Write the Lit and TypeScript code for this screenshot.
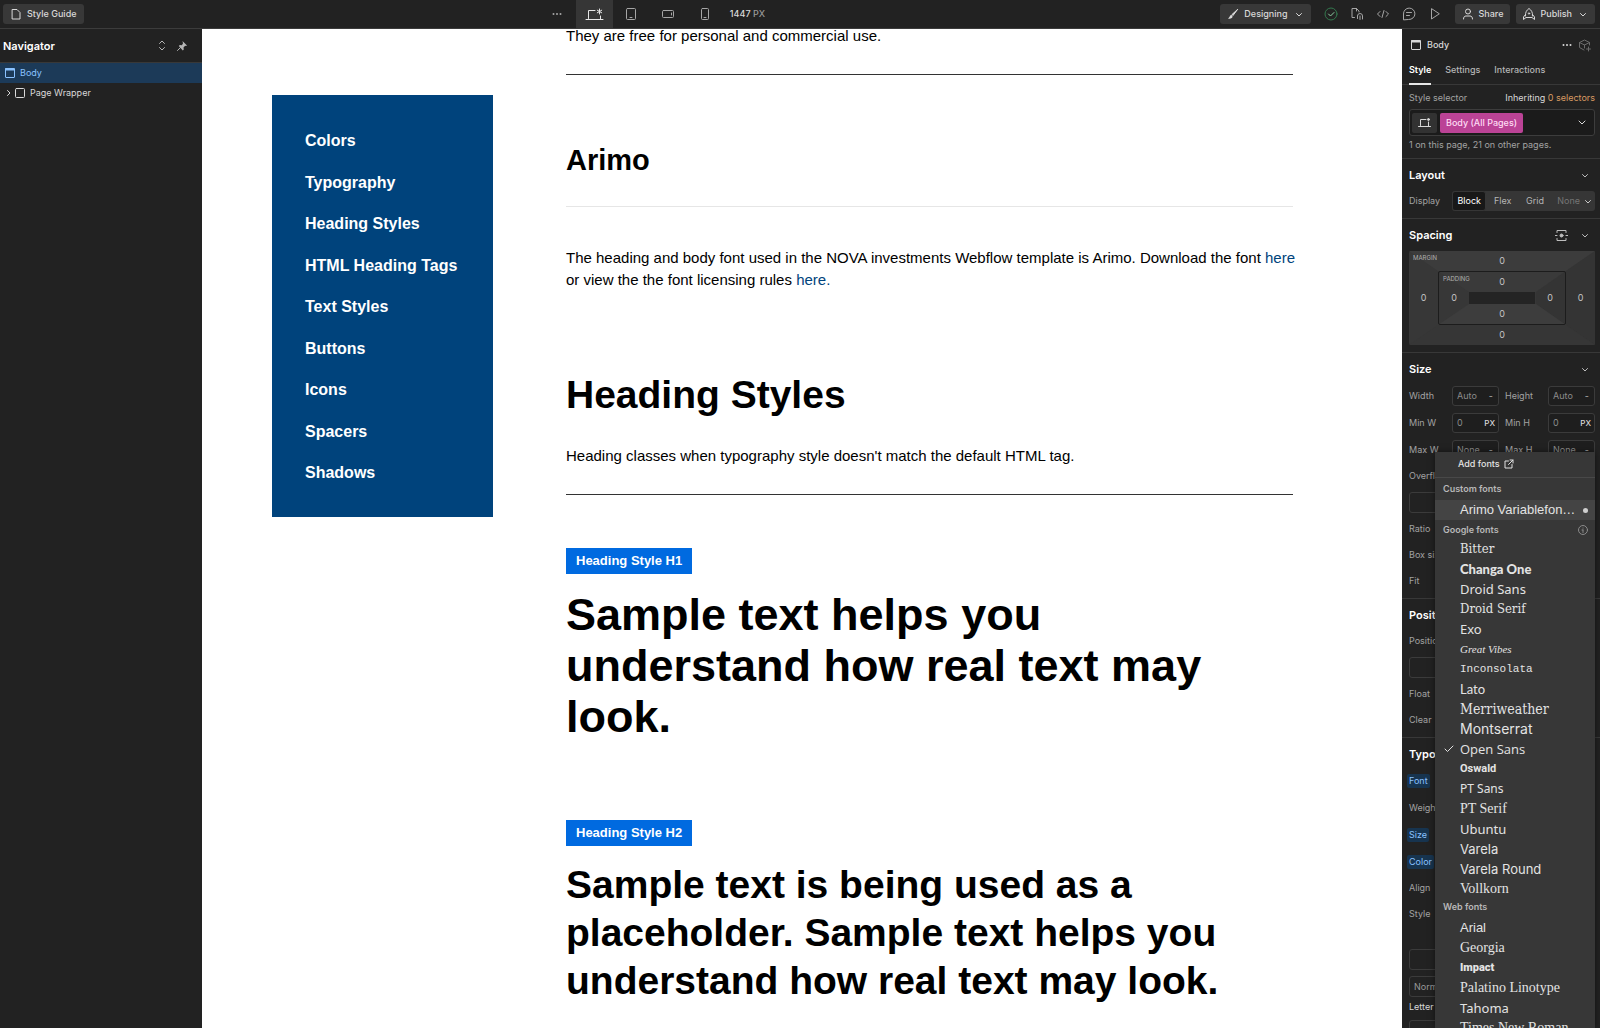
import { LitElement, html, css, svg, nothing } from "lit";
import { customElement } from "lit/decorators.js";
import { classMap } from "lit/directives/class-map.js";

const base = css`
  * {
    box-sizing: border-box;
  }
  :host {
    --ui: Inter, "Liberation Sans", sans-serif;
    --bg: #222222;
    --line: #383838;
    --text: #d9d9d9;
    --dim: #a3a3a3;
    display: block;
    min-width: 0;
    min-height: 0;
    color: var(--text);
    font: 400 9px/14px var(--ui);
  }
  button,
  input {
    margin: 0;
    padding: 0;
    border: 0;
    background: none;
    color: inherit;
    font: inherit;
  }
  h2,
  h3,
  p,
  ul {
    margin: 0;
    padding: 0;
  }
  ul {
    list-style: none;
  }
  svg {
    display: block;
    flex: none;
    fill: none;
    stroke: currentColor;
    stroke-linecap: round;
    stroke-linejoin: round;
  }
`;

const icon = (body: unknown, w = 14, h = 14) =>
  html`<svg width=${w} height=${h} viewBox="0 0 ${w} ${h}" aria-hidden="true">${body}</svg>`;

const chevron = () => icon(svg`<path d="M2.500 3.500L5 6l2.500-2.500"/>`, 10, 9);
const dots = () =>
  icon(svg`<g fill="currentColor" stroke="none"><circle cx="2.500" cy="7" r="1"/><circle cx="6" cy="7" r="1"/><circle cx="9.500" cy="7" r="1"/></g>`, 12, 14);
const desktop = () =>
  icon(svg`<path d="M3.500 11.500V3.500H10M1 12.500H18M15.500 9v3"/><path d="M14.500 2v5M12.300 3.200l4.400 2.600M16.700 3.200l-4.400 2.600"/>`, 19, 15);
const bodyIcon = () =>
  icon(svg`<rect x="1.500" y="1.500" width="9" height="9" rx=".5"/><path d="M1 2.500h10" stroke-width="2" stroke-linecap="butt"/>`, 12, 12);

@customElement("top-bar")
class TopBar extends LitElement {
  static styles = [
    base,
    css`
      :host {
        background: var(--bg);
        border-bottom: 1px solid #3c3c3c;
        font-weight: 500;
      }
      .bar {
        display: flex;
        justify-content: space-between;
        align-items: center;
        height: 28px;
        padding: 0 5px 0 3px;
      }
      .group {
        display: flex;
        align-items: center;
      }
      .pill {
        display: flex;
        align-items: center;
        gap: 4px;
        height: 20px;
        padding: 0 7px 0 6px;
        border-radius: 3px;
        background: #383838;
      }
      .pill svg:last-child:not(:first-child) {
        margin-left: 2px;
      }
      .tool {
        display: grid;
        place-items: center;
        width: 37px;
        height: 28px;
        color: #a6a6a6;
      }
      .tool.on {
        background: #363636;
        color: #e6e6e6;
      }
      .size {
        padding-left: 6px;
      }
      .size span {
        color: #999999;
      }
      .icons {
        gap: 12px;
        margin: 0 13px;
        color: #a6a6a6;
      }
      .icons button:first-child {
        color: #33784e;
      }
      .publish {
        margin-left: 6px;
      }
    `,
  ];
  render() {
    return html`<header class="bar">
      <button class="pill">
        ${icon(svg`<path d="M3.500 2.500h4.500l3 3v6.500h-7.500z"/>`)}Style Guide
      </button>
      <div class="group">
        <button class="tool" aria-label="More breakpoints">${dots()}</button>
        <button class="tool on" aria-label="Desktop">${desktop()}</button>
        <button class="tool" aria-label="Tablet">
          ${icon(svg`<rect x="2.500" y="1.500" width="9" height="11" rx="1"/><path d="M6 10.500h2"/>`)}
        </button>
        <button class="tool" aria-label="Mobile landscape">
          ${icon(svg`<rect x="1.500" y="3.500" width="11" height="7" rx="1"/><path d="M10.500 6v2"/>`)}
        </button>
        <button class="tool" aria-label="Mobile portrait">
          ${icon(svg`<rect x="3.500" y="1.500" width="7" height="11" rx="1"/><path d="M6 10.500h2"/>`)}
        </button>
        <div class="size">1447 <span>PX</span></div>
      </div>
      <div class="group">
        <button class="pill">
          ${icon(svg`<path d="M11.500 2.500L6 7.500l1 1L11.500 2.500z" fill="currentColor"/><path d="M5.500 8c-2 0-1.500 2.500-3.500 3.500 2 .5 5 0 4.500-2.500z" fill="currentColor" stroke="none"/>`)}Designing${chevron()}
        </button>
        <div class="group icons">
          <button aria-label="Saved">${icon(svg`<circle cx="7" cy="7" r="6"/><path d="M4.500 7l2 2 3.500-3.500" stroke="#8fd0a5"/>`)}</button>
          <button aria-label="Audit">
            ${icon(svg`<path d="M4.500 10.500H2v-9h4.500l2.500 2.500v1M6.500 1.500v2.500"/><path d="M7.500 11V9a2.500 2.500 0 0 1 5 0v3M7.500 9v2.500M10 9v3.500"/>`)}
          </button>
          <button aria-label="Code">${icon(svg`<path d="M4 4.500L1.500 7 4 9.500M10 4.500L12.500 7 10 9.500M8 3.500L6 10.500"/>`)}</button>
          <button aria-label="Comments">
            ${icon(svg`<path d="M1.500 12.500V7A5.700 5.700 0 1 1 7 12.500zM4.500 5.500h5M4.500 8.500h3"/>`)}
          </button>
          <button aria-label="Preview">${icon(svg`<path d="M3.500 2v10L11 7z"/>`)}</button>
        </div>
        <button class="pill">
          ${icon(svg`<circle cx="7" cy="4.500" r="2.500"/><path d="M2.500 12c0-2 1-3 2.500-3h4c1.500 0 2.500 1 2.500 3"/>`)}Share
        </button>
        <button class="pill publish">
          ${icon(svg`<path d="M3.500 9c-.5-4 1.500-6 3.500-7.500C9 3 11 5 10.500 9M3.500 7.500L1.500 10v2.500L4 10.500h6l2.500 2V10l-2-2.500"/><circle cx="7" cy="6.500" r=".7"/>`)}Publish${chevron()}
        </button>
      </div>
    </header>`;
  }
}

@customElement("navigator-panel")
class NavigatorPanel extends LitElement {
  static styles = [
    base,
    css`
      :host {
        background: var(--bg);
      }
      .head {
        display: flex;
        align-items: center;
        gap: 8px;
        height: 34px;
        padding: 0 14px 0 3px;
        border-bottom: 1px solid var(--line);
        color: #b5b5b5;
      }
      h2 {
        flex: 1;
        color: #ffffff;
        font-size: 11px;
        font-weight: 600;
      }
      .row {
        display: flex;
        align-items: center;
        gap: 4px;
        width: 100%;
        height: 20px;
        padding: 0 4px;
      }
      .row.on {
        background: #1c3a58;
        color: #8ac2ff;
      }
      .row .twist {
        margin-right: -4px;
      }
    `,
  ];
  render() {
    return html`<div class="head">
        <h2>Navigator</h2>
        <button aria-label="Expand or collapse all">${icon(svg`<path d="M3.500 4.500L6 2l2.500 2.500M3.500 8.500L6 11l2.500-2.500"/>`, 12, 13)}</button>
        <button aria-label="Pin panel">
          ${icon(svg`<path d="M6.500 1l4.500 4.500-1 .5-.8-.3-1.700 1.800.3 2-1 1-4-4.500 1-1 2 .3L7 3.500z" fill="currentColor" stroke="none"/><path d="M4.500 7.500L1.500 10.500"/>`, 12, 12)}
        </button>
      </div>
      <ul>
        <li><button class="row on">${bodyIcon()}<span>Body</span></button></li>
        <li>
          <button class="row">
            <span class="twist">${icon(svg`<path d="M3.500 3.500L6 6 3.500 8.500"/>`, 10, 12)}</span>
            ${icon(svg`<rect x="1.500" y="1.500" width="9" height="9" rx="1"/>`, 12, 12)}
            <span>Page Wrapper</span>
          </button>
        </li>
      </ul>`;
  }
}

const guideLinks = [
  "Colors",
  "Typography",
  "Heading Styles",
  "HTML Heading Tags",
  "Text Styles",
  "Buttons",
  "Icons",
  "Spacers",
  "Shadows",
];

@customElement("page-canvas")
class PageCanvas extends LitElement {
  static styles = [
    base,
    css`
      :host {
        overflow: hidden;
        background: #ffffff;
        color: #000000;
        font: 400 15px/22px "Liberation Sans", Arial, sans-serif;
      }
      a {
        color: #00437c;
        text-decoration: none;
      }
      .page {
        display: grid;
        grid-template-columns: 221px minmax(0, 1fr);
        align-items: start;
        gap: 73px;
        padding: 0 109px 0 70px;
      }
      nav {
        display: flex;
        flex-direction: column;
        justify-content: space-between;
        min-height: 422px;
        margin-top: 66px;
        padding: 36px 33px 34px;
        background: #00437c;
        font-size: 16px;
        font-weight: 700;
        line-height: 20px;
        white-space: nowrap;
      }
      nav a {
        color: #ffffff;
      }
      article {
        margin-top: -4px;
      }
      article p {
        margin-right: -8px;
      }
      hr {
        height: 1px;
        margin: 27px 0 53px;
        border: 0;
        background: #333333;
      }
      hr.soft {
        margin: 28px 0 40px;
        background: #e6e6e6;
      }
      h2,
      h3 {
        font-weight: 700;
      }
      .family {
        margin-top: 67px;
        font-size: 29px;
        line-height: 36px;
      }
      .title {
        margin: 80px 0 26px;
        font-size: 39px;
        line-height: 48px;
      }
      .badge {
        display: inline-block;
        height: 26px;
        padding: 0 10px;
        background: #006ae0;
        color: #ffffff;
        font-size: 13px;
        font-weight: 700;
        line-height: 25px;
        vertical-align: top;
      }
      .h1 {
        margin: 15px 0 78px;
        font-size: 45px;
        line-height: 51px;
      }
      .h2 {
        margin-top: 15px;
        font-size: 39px;
        line-height: 48px;
      }
    `,
  ];
  render() {
    return html`<div class="page">
      <nav>${guideLinks.map((t) => html`<a href="#">${t}</a>`)}</nav>
      <article>
        <p>They are free for personal and commercial use.</p>
        <hr />
        <h3 class="family">Arimo</h3>
        <hr class="soft" />
        <p>
          The heading and body font used in the NOVA investments Webflow template is Arimo. Download the font
          <a href="#">here</a> or view the the font licensing rules <a href="#">here.</a>
        </p>
        <h2 class="title">Heading Styles</h2>
        <p>Heading classes when typography style doesn't match the default HTML tag.</p>
        <hr />
        <div class="badge">Heading Style H1</div>
        <h3 class="h1">Sample text helps you understand how real text may look.</h3>
        <div class="badge">Heading Style H2</div>
        <h3 class="h2">
          Sample text is being used as a placeholder. Sample text helps you understand how real text may look.
        </h3>
      </article>
    </div>`;
  }
}

type FontRow = { name: string; face: string; selected?: boolean };
const googleFonts: FontRow[] = [
  { name: "Bitter", face: "slab" },
  { name: "Changa One", face: "black" },
  { name: "Droid Sans", face: "noto" },
  { name: "Droid Serif", face: "slab" },
  { name: "Exo", face: "noto" },
  { name: "Great Vibes", face: "script" },
  { name: "Inconsolata", face: "mono" },
  { name: "Lato", face: "lato" },
  { name: "Merriweather", face: "slab-large" },
  { name: "Montserrat", face: "wide-large" },
  { name: "Open Sans", face: "open", selected: true },
  { name: "Oswald", face: "narrow" },
  { name: "PT Sans", face: "small" },
  { name: "PT Serif", face: "serif" },
  { name: "Ubuntu", face: "noto" },
  { name: "Varela", face: "wide" },
  { name: "Varela Round", face: "wide" },
  { name: "Vollkorn", face: "serif" },
];
const webFonts: FontRow[] = [
  { name: "Arial", face: "arial" },
  { name: "Georgia", face: "serif" },
  { name: "Impact", face: "impact" },
  { name: "Palatino Linotype", face: "serif" },
  { name: "Tahoma", face: "noto" },
  { name: "Times New Roman", face: "serif" },
];

@customElement("font-menu")
class FontMenu extends LitElement {
  static styles = [
    base,
    css`
      :host {
        overflow: hidden;
        background: #373737;
        color: #e3e3e3;
        box-shadow: 0 0 6px rgba(0, 0, 0, 0.5);
      }
      .add {
        display: flex;
        align-items: center;
        gap: 4px;
        width: 100%;
        height: 26px;
        padding: 0 0 1px 23px;
        border-bottom: 1px solid #484848;
        font-weight: 500;
      }
      .group {
        display: flex;
        align-items: center;
        justify-content: space-between;
        height: 19px;
        padding: 0 7px 0 8px;
        color: #b8b8b8;
        font-weight: 600;
      }
      .group.first {
        height: 22px;
      }
      .group.web {
        padding-bottom: 3px;
      }
      .font {
        display: flex;
        align-items: center;
        gap: 6px;
        width: 100%;
        height: 20px;
        padding-right: 7px;
        font-size: 13px;
        line-height: 20px;
        text-align: left;
        white-space: nowrap;
      }
      .tick {
        display: flex;
        justify-content: flex-end;
        width: 19px;
      }
      .label {
        flex: 1;
      }
      .on {
        background: #444444;
      }
      .dot {
        width: 5px;
        height: 5px;
        border-radius: 50%;
        background: #cfcfcf;
      }
      .slab,
      .slab-large {
        font-family: "DejaVu Serif Condensed", "DejaVu Serif", serif;
      }
      .slab-large {
        font-size: 14px;
      }
      .black {
        font-family: Lato, sans-serif;
        font-weight: 900;
      }
      .noto {
        font-family: "Noto Sans", sans-serif;
      }
      .open {
        font-family: "Open Sans", sans-serif;
      }
      .small {
        font-family: "Noto Sans", sans-serif;
        font-size: 12px;
      }
      .script {
        font-family: "Liberation Serif", serif;
        font-style: italic;
        font-size: 11px;
      }
      .mono {
        font-family: "Liberation Mono", monospace;
        font-size: 11px;
      }
      .lato {
        font-family: Lato, sans-serif;
      }
      .wide,
      .wide-large {
        font-family: Inter, sans-serif;
      }
      .wide-large {
        font-size: 14px;
      }
      .narrow {
        font-family: Roboto, sans-serif;
        font-size: 11px;
        font-weight: 700;
      }
      .impact {
        font-family: Roboto, sans-serif;
        font-size: 11px;
        font-weight: 900;
      }
      .serif {
        font-family: "Liberation Serif", serif;
        font-size: 14px;
      }
      .arial {
        font-family: "Liberation Sans", Arial, sans-serif;
      }
    `,
  ];
  private row(f: FontRow) {
    return html`<button class=${classMap({ font: true, [f.face]: true })} role="option" aria-selected=${f.selected ? "true" : "false"}>
      <span class="tick">${f.selected ? icon(svg`<path d="M1 5l2.500 2.500L9 2"/>`, 10, 10) : nothing}</span>
      <span class="label">${f.name}</span>
    </button>`;
  }
  render() {
    return html`<button class="add">
        Add fonts
        ${icon(svg`<path d="M4.500 2H1v7h7V5.500M6 1h3v3M9 1L4.500 5.500"/>`, 10, 11)}
      </button>
      <div class="group first">Custom fonts</div>
      <button class="font arial on" role="option" aria-selected="false">
        <span class="tick"></span><span class="label">Arimo Variablefon…</span><span class="dot"></span>
      </button>
      <div class="group">
        Google fonts
        ${icon(svg`<g stroke="#8a8a8a"><circle cx="5" cy="5" r="4.500"/><path d="M5 5v2.500M4 5h1M5 3v.1"/></g>`, 10, 10)}
      </div>
      ${googleFonts.map((f) => this.row(f))}
      <div class="group web">Web fonts</div>
      ${webFonts.map((f) => this.row(f))}`;
  }
}

@customElement("style-panel")
class StylePanel extends LitElement {
  static styles = [
    base,
    css`
      :host {
        position: relative;
        overflow: hidden;
        background: var(--bg);
      }
      .head {
        display: flex;
        align-items: center;
        gap: 5px;
        height: 33px;
        padding: 0 8px 1px;
        font-weight: 500;
      }
      .head .name {
        flex: 1;
      }
      .head .off {
        color: #6b6b6b;
      }
      .tabs {
        display: flex;
        gap: 14px;
        height: 23px;
        padding: 0 7px;
        border-bottom: 1px solid var(--line);
        font-weight: 500;
        color: #b5b5b5;
      }
      .tabs button {
        height: 23px;
        padding-bottom: 7px;
      }
      .tabs .on {
        border-bottom: 2px solid #e6e6e6;
        padding-bottom: 5px;
        color: #ffffff;
        font-weight: 600;
      }
      section {
        padding: 0 5px 7px 7px;
        border-bottom: 1px solid var(--line);
      }
      .selector {
        padding-top: 6px;
        padding-bottom: 6px;
      }
      .between {
        display: flex;
        justify-content: space-between;
      }
      .muted,
      label,
      .lab {
        color: var(--dim);
      }
      .orange {
        color: #d99a63;
      }
      .combo {
        display: flex;
        align-items: center;
        gap: 3px;
        height: 27px;
        margin: 4px 0 2px;
        padding: 0 7px 0 2px;
        border: 1px solid #3d3d3d;
        border-radius: 3px;
        background: #1b1b1b;
      }
      .combo .bp {
        display: grid;
        place-items: center;
        width: 25px;
        height: 20px;
        border-radius: 2px;
        background: #323232;
      }
      .chip {
        height: 20px;
        padding: 0 6px;
        border-radius: 2px;
        background: #bb4396;
        color: #ffdcf4;
        font-weight: 500;
      }
      .open {
        margin-left: auto;
      }
      .title {
        display: flex;
        align-items: center;
        gap: 12px;
        height: 32px;
        padding-right: 5px;
        color: #bdbdbd;
      }
      h3 {
        flex: 1;
        color: #ffffff;
        font-size: 11px;
        font-weight: 600;
      }
      .rows {
        display: grid;
        gap: 6px;
      }
      .row {
        display: grid;
        grid-template-columns: 43px minmax(0, 1fr) 49px minmax(0, 1fr);
        align-items: center;
        min-height: 20px;
        white-space: nowrap;
      }
      .row.tall {
        min-height: 21px;
      }
      .row label:nth-of-type(2) {
        padding-left: 6px;
      }
      .seg {
        display: flex;
        grid-column: 2 / -1;
        height: 20px;
        border-radius: 3px;
        background: #363636;
        color: #b5b5b5;
      }
      .seg button {
        flex: 1;
      }
      .seg .on {
        border: 1px solid #363636;
        border-radius: 3px;
        background: #181818;
        color: #ffffff;
      }
      .seg .none {
        display: flex;
        flex: none;
        align-items: center;
        gap: 3px;
        padding: 0 2px 0 6px;
        color: #c9c9c9;
      }
      .seg .none span {
        color: #757575;
      }
      .field {
        display: flex;
        align-items: center;
        height: 20px;
        padding: 0 3px 0 4px;
        border: 1px solid #3b3b3b;
        border-radius: 3px;
        background: #1e1e1e;
      }
      .field input {
        flex: 1;
        width: 0;
        color: #8c8c8c;
      }
      .field .dash {
        padding-right: 2px;
        color: #b0b0b0;
      }
      .field .unit {
        font-size: 8px;
        font-weight: 500;
      }
      .wide {
        height: 21px;
        padding: 0 4px;
        border: 1px solid #3b3b3b;
        border-radius: 3px;
        color: #999999;
        text-align: left;
      }
      .wide.gap {
        margin-top: 19px;
      }
      .letter {
        margin-top: -3px;
        line-height: 14px;
        white-space: nowrap;
      }
      .set {
        justify-self: start;
        margin-left: -2px;
        padding: 0 2px;
        border-radius: 2px;
        background: #17344f;
        color: #8ac2ff;
      }
      .space {
        position: relative;
        display: grid;
        grid-template: 20px 54px 20px / 29px minmax(0, 1fr) 29px;
        place-items: center;
        color: #c4c4c4;
      }
      .space .bevel {
        position: absolute;
        inset: 0;
        width: 100%;
        height: 100%;
        stroke: none;
      }
      .space button {
        position: relative;
      }
      .across {
        grid-column: 1 / -1;
      }
      .pad {
        position: relative;
        display: grid;
        grid-template: 20px 12px 20px / 30px minmax(0, 1fr) 30px;
        place-items: center;
        width: 100%;
        height: 54px;
        border: 1px solid #1c1c1c;
        border-radius: 2px;
      }
      .core {
        width: 100%;
        height: 12px;
        background: #242424;
      }
      .cap {
        position: absolute;
        top: 2px;
        left: 4px;
        color: #b0b0b0;
        font-size: 6px;
        line-height: 10px;
      }
      font-menu {
        position: absolute;
        top: 423px;
        right: 5px;
        bottom: 0;
        width: 160px;
      }
    `,
  ];
  private title(name: string, extra: unknown = nothing) {
    return html`<div class="title"><h3>${name}</h3>${extra}<button aria-label="Toggle ${name}">${chevron()}</button></div>`;
  }
  private field(id: string, value: string, unit: string) {
    return html`<div class="field">
      <input id=${id} .value=${value} /><span class=${unit === "-" ? "dash" : "unit"}>${unit}</span>
    </div>`;
  }
  private pair(a: string, b: string, value: string, unit: string) {
    const ia = a.replace(" ", "-").toLowerCase();
    const ib = b.replace(" ", "-").toLowerCase();
    return html`<div class="row tall">
      <label for=${ia}>${a}</label>${this.field(ia, value, unit)}
      <label for=${ib}>${b}</label>${this.field(ib, value, unit)}
    </div>`;
  }
  private line(name: string, set = false, tall = false) {
    return html`<div class=${classMap({ row: true, tall })}><span class=${set ? "set" : "lab"}>${name}</span></div>`;
  }
  render() {
    return html`<div class="head">
        ${bodyIcon()}<span class="name">Body</span>
        <button aria-label="More">${dots()}</button>
        <button class="off" aria-label="Create component">
          ${icon(svg`<path d="M6 12L1.500 9.500v-5L6.500 2l5 2.500V7M1.500 4.500l5 2.500 5-2.500M6.500 7v3M10.500 9v4M8.500 11h4"/>`)}
        </button>
      </div>
      <div class="tabs">
        <button class="on">Style</button><button>Settings</button><button>Interactions</button>
      </div>
      <section class="selector">
        <div class="between">
          <span class="muted">Style selector</span><span>Inheriting <span class="orange">0 selectors</span></span>
        </div>
        <div class="combo">
          <button class="bp" aria-label="Breakpoint">
            ${icon(svg`<path d="M2.500 8.500V2.500H8M.5 9.500h12M10.500 5v4"/><circle cx="10.500" cy="2.500" r="1" fill="currentColor"/>`, 13, 12)}
          </button>
          <button class="chip">Body (All Pages)</button>
          <button class="open" aria-label="Open selectors">${icon(svg`<path d="M2 3l3 3 3-3"/>`, 10, 9)}</button>
        </div>
        <p class="muted">1 on this page, 21 on other pages.</p>
      </section>
      <section>
        ${this.title("Layout")}
        <div class="row">
          <span class="lab">Display</span>
          <div class="seg">
            <button class="on">Block</button><button>Flex</button><button>Grid</button>
            <button class="none"><span>None</span>${chevron()}</button>
          </div>
        </div>
      </section>
      <section>
        ${this.title(
          "Spacing",
          html`<button aria-label="Center element">
            ${icon(svg`<path d="M2 3.500V1.500h9v2M2 9.500v2h9v-2M0 6.500h2M11 6.500h2"/><circle cx="6.500" cy="6.500" r="1.500" fill="currentColor"/>`, 13, 13)}
          </button>`,
        )}
        <div class="space">
          <svg class="bevel" viewBox="0 0 186 94" preserveAspectRatio="none" aria-hidden="true">
            <rect width="186" height="94" rx="2" fill="#373737" />
            <path d="M0 0H186L157 20H29z" fill="#3c3c3c" />
            <path d="M186 0V94L157 74V20z" fill="#343434" />
            <path d="M0 94H186L157 74H29z" fill="#363636" />
            <rect x="29" y="20" width="128" height="54" fill="#373737" />
            <path d="M29 20H157L127 41H60z" fill="#3a3a3a" />
            <path d="M157 20V74L127 53V41z" fill="#343434" />
            <path d="M29 74H157L127 53H60z" fill="#3d3d3d" />
          </svg>
          <span class="cap">MARGIN</span>
          <button class="across">0</button>
          <button>0</button>
          <div class="pad">
            <span class="cap">PADDING</span>
            <button class="across">0</button>
            <button>0</button>
            <div class="core"></div>
            <button>0</button>
            <button class="across">0</button>
          </div>
          <button>0</button>
          <button class="across">0</button>
        </div>
      </section>
      <section>
        ${this.title("Size")}
        <div class="rows">
          ${this.pair("Width", "Height", "Auto", "-")} ${this.pair("Min W", "Min H", "0", "PX")}
          ${this.pair("Max W", "Max H", "None", "-")} ${this.line("Overflow")}
          <button class="wide" aria-label="Overflow mode"></button>
          ${this.line("Ratio")} ${this.line("Box size")} ${this.line("Fit")}
        </div>
      </section>
      <section>
        ${this.title("Position")}
        <div class="rows">
          ${this.line("Position")}
          <button class="wide" aria-label="Position mode"></button>
          ${this.line("Float")} ${this.line("Clear")}
        </div>
      </section>
      <section>
        ${this.title("Typography")}
        <div class="rows">
          ${this.line("Font", true, true)} ${this.line("Weight", false, true)} ${this.line("Size", true, true)}
          ${this.line("Color", true, true)} ${this.line("Align")} ${this.line("Style")}
          <button class="wide gap" aria-label="Decoration"></button>
          <button class="wide">Normal</button>
          <div class="letter">Letter spacing</div>
          <button class="wide" aria-label="Capitalize"></button>
        </div>
      </section>
      <font-menu role="listbox" aria-label="Fonts"></font-menu>`;
  }
}

@customElement("app-root")
class AppRoot extends LitElement {
  static styles = css`
    :host {
      display: grid;
      grid-template: auto minmax(0, 1fr) / 202px minmax(0, 1fr) 198px;
      height: 100vh;
      overflow: hidden;
      background: #222222;
    }
    top-bar {
      grid-column: 1 / -1;
    }
  `;
  render() {
    return html`<top-bar></top-bar>
      <navigator-panel></navigator-panel>
      <page-canvas></page-canvas>
      <style-panel></style-panel>`;
  }
}
